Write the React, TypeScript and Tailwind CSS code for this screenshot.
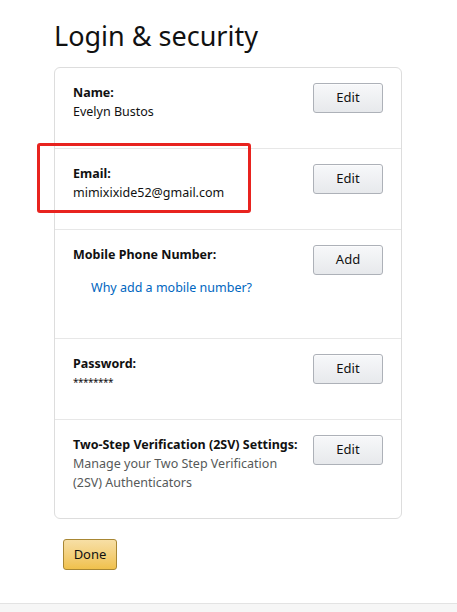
import React from "react";

interface Field {
  label: string;
  value?: string;
  action: string;
}

const font = { fontFamily: '"Noto Sans", "Open Sans", Arial, sans-serif' };

function GrayButton({ children }: { children: React.ReactNode }) {
  return (
    <button className="w-[70px] h-[30px] shrink-0 rounded-[3px] border border-[#adb1b8] bg-gradient-to-b from-[#f7f8fa] to-[#e7e9ec] text-[13px] text-[#111] shadow-[0_1px_0_rgba(255,255,255,0.6)_inset]">
      {children}
    </button>
  );
}

function App() {
  const fields: Field[] = [
    { label: "Name:", value: "Evelyn Bustos", action: "Edit" },
    { label: "Email:", value: "mimixixide52@gmail.com", action: "Edit" },
  ];

  return (
    <div className="w-[457px] h-[612px] bg-white flex flex-col text-[#111]" style={font}>
      <main className="relative flex-1 pl-[54px]">
        <h1 className="pt-[18px] text-[27px] leading-[36px] font-normal">Login &amp; security</h1>

        <div className="mt-[13px] w-[348px] rounded-[6px] border border-[#ddd]">
          {fields.map((f) => (
            <div key={f.label} className="flex justify-between border-b border-[#e7e7e7] px-[18px] pt-[15px] pb-[27px]">
              <div className="text-[12.5px] leading-[19px]">
                <div className="font-bold">{f.label}</div>
                <div>{f.value}</div>
              </div>
              <GrayButton>{f.action}</GrayButton>
            </div>
          ))}

          {/* mobile */}
          <div className="flex justify-between border-b border-[#e7e7e7] px-[18px] pt-[15px] pb-[27px]">
            <div className="text-[12.5px] leading-[19px]">
              <div className="font-bold">Mobile Phone Number:</div>
              <a className="block pl-[18px] my-[14px] text-[#0066c0]">Why add a mobile number?</a>
            </div>
            <GrayButton>Add</GrayButton>
          </div>

          {/* password */}
          <div className="flex justify-between border-b border-[#e7e7e7] px-[18px] pt-[15px] pb-[27px]">
            <div className="text-[12.5px] leading-[19px]">
              <div className="font-bold">Password:</div>
              <div className="text-[10px] tracking-[-0.5px]">********</div>
            </div>
            <GrayButton>Edit</GrayButton>
          </div>

          {/* 2sv */}
          <div className="flex justify-between gap-[12px] px-[18px] pt-[15px] pb-[26px]">
            <div className="flex-1 text-[12.5px] leading-[19px]">
              <div className="font-bold whitespace-nowrap">Two-Step Verification (2SV) Settings:</div>
              <div className="text-[#565959] w-[212px]">Manage your Two Step Verification (2SV) Authenticators</div>
            </div>
            <GrayButton>Edit</GrayButton>
          </div>
        </div>

        <button className="mt-[20px] ml-[9px] w-[54px] h-[31px] rounded-[3px] border border-[#a88734] bg-gradient-to-b from-[#f7dfa5] to-[#f0c14b] text-[13px] text-[#111]">
          Done
        </button>

        {/* red annotation box */}
        <div className="absolute left-[37px] top-[143px] w-[214px] h-[70px] rounded-[3px] border-[3px] border-[#e8231f]"></div>
      </main>
      <footer className="h-[9px] border-t border-[#e3e3e3] bg-[#f6f6f6]"></footer>
    </div>
  );
}

export default App;
